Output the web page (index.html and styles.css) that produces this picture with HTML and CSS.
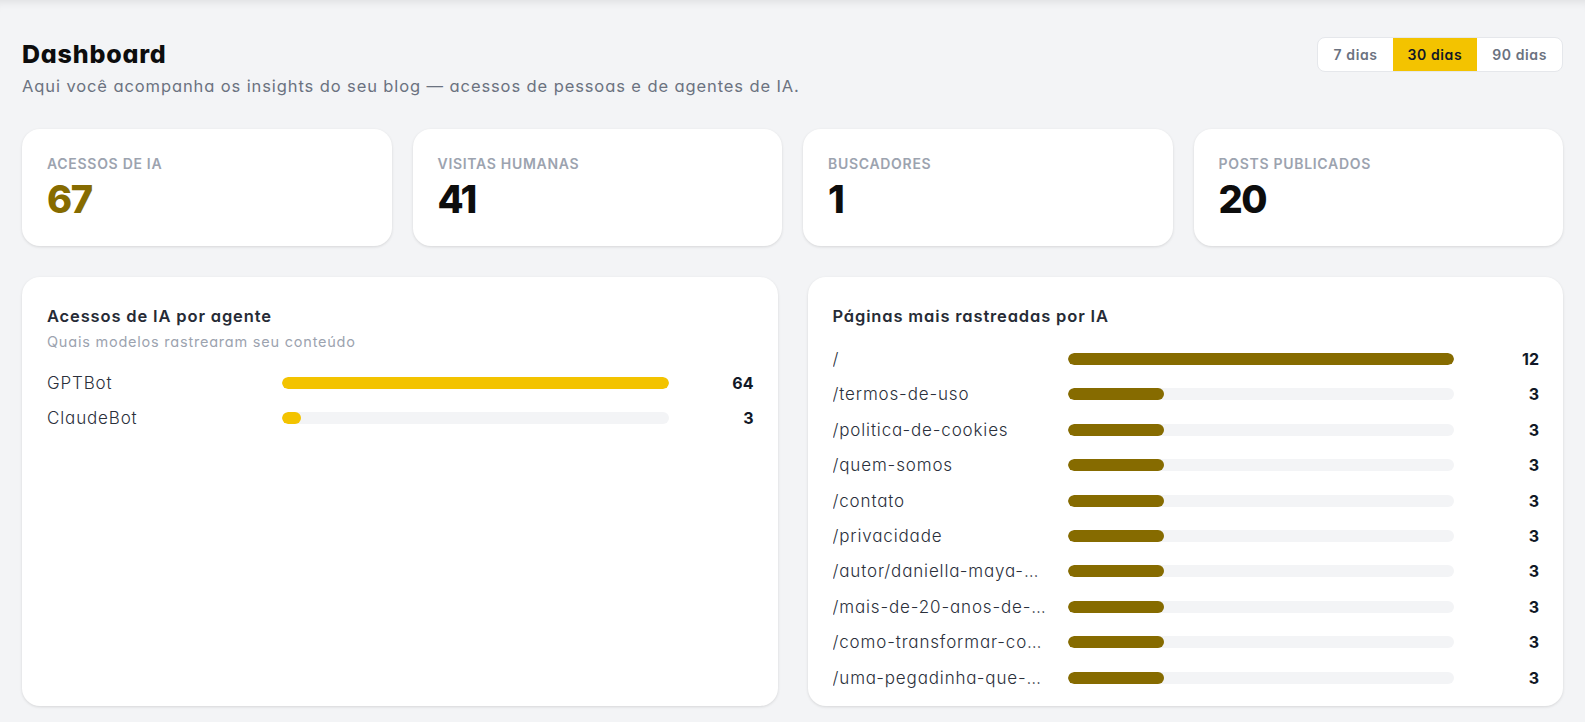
FILE: index.html
```html
<!DOCTYPE html>
<html lang="pt-BR">
<head>
<meta charset="utf-8">
<title>Dashboard</title>
<link rel="stylesheet" href="styles.css">
</head>
<body>
<main class="page">
  <header class="page-header">
    <div class="heading">
      <h1 class="title">Dashboard</h1>
      <p class="subtitle">Aqui você acompanha os insights do seu blog — acessos de pessoas e de agentes de IA.</p>
    </div>
    <div class="range">
      <button class="range-btn">7 dias</button>
      <button class="range-btn active">30 dias</button>
      <button class="range-btn">90 dias</button>
    </div>
  </header>

  <section class="stats">
    <div class="stat-card">
      <div class="stat-label">Acessos de IA</div>
      <div class="stat-value accent">67</div>
    </div>
    <div class="stat-card">
      <div class="stat-label">Visitas humanas</div>
      <div class="stat-value">41</div>
    </div>
    <div class="stat-card">
      <div class="stat-label">Buscadores</div>
      <div class="stat-value">1</div>
    </div>
    <div class="stat-card">
      <div class="stat-label">Posts publicados</div>
      <div class="stat-value">20</div>
    </div>
  </section>

  <section class="panels">
    <div class="panel">
      <h2 class="panel-title">Acessos de IA por agente</h2>
      <p class="panel-sub">Quais modelos rastrearam seu conteúdo</p>
      <div class="rows rows-agents">
        <div class="row">
          <span class="row-label">GPTBot</span>
          <div class="track"><div class="fill yellow" style="width:100%"></div></div>
          <span class="row-value">64</span>
        </div>
        <div class="row">
          <span class="row-label">ClaudeBot</span>
          <div class="track"><div class="fill yellow" style="width:4.69%"></div></div>
          <span class="row-value">3</span>
        </div>
      </div>
    </div>

    <div class="panel">
      <h2 class="panel-title">Páginas mais rastreadas por IA</h2>
      <div class="rows rows-pages">
        <div class="row">
          <span class="row-label">/</span>
          <div class="track"><div class="fill olive" style="width:100%"></div></div>
          <span class="row-value">12</span>
        </div>
        <div class="row">
          <span class="row-label">/termos-de-uso</span>
          <div class="track"><div class="fill olive" style="width:25%"></div></div>
          <span class="row-value">3</span>
        </div>
        <div class="row">
          <span class="row-label">/politica-de-cookies</span>
          <div class="track"><div class="fill olive" style="width:25%"></div></div>
          <span class="row-value">3</span>
        </div>
        <div class="row">
          <span class="row-label">/quem-somos</span>
          <div class="track"><div class="fill olive" style="width:25%"></div></div>
          <span class="row-value">3</span>
        </div>
        <div class="row">
          <span class="row-label">/contato</span>
          <div class="track"><div class="fill olive" style="width:25%"></div></div>
          <span class="row-value">3</span>
        </div>
        <div class="row">
          <span class="row-label">/privacidade</span>
          <div class="track"><div class="fill olive" style="width:25%"></div></div>
          <span class="row-value">3</span>
        </div>
        <div class="row">
          <span class="row-label">/autor/daniella-maya-…</span>
          <div class="track"><div class="fill olive" style="width:25%"></div></div>
          <span class="row-value">3</span>
        </div>
        <div class="row">
          <span class="row-label">/mais-de-20-anos-de-…</span>
          <div class="track"><div class="fill olive" style="width:25%"></div></div>
          <span class="row-value">3</span>
        </div>
        <div class="row">
          <span class="row-label">/como-transformar-co…</span>
          <div class="track"><div class="fill olive" style="width:25%"></div></div>
          <span class="row-value">3</span>
        </div>
        <div class="row">
          <span class="row-label">/uma-pegadinha-que-…</span>
          <div class="track"><div class="fill olive" style="width:25%"></div></div>
          <span class="row-value">3</span>
        </div>
      </div>
    </div>
  </section>
</main>
</body>
</html>
```

FILE: styles.css
```css
* { box-sizing: border-box; }

html, body {
  margin: 0;
  padding: 0;
  height: 100%;
}

body {
  background: #f3f4f6;
  font-family: "Inter", "Noto Sans", sans-serif;
  font-feature-settings: "cv11" 1;
  color: #111827;
  overflow: hidden;
}

.page {
  min-height: 100%;
  padding: 38px 22px 24px 22px;
  box-shadow: inset 0 9px 9px -7px rgba(0, 0, 0, 0.09);
}

.page-header {
  display: flex;
  justify-content: space-between;
  align-items: flex-start;
}

.title {
  margin: 0;
  font-size: 25px;
  line-height: 32px;
  font-weight: 800;
  color: #0d0d0d;
  letter-spacing: 0.8px;
}

.subtitle {
  margin: 4px 0 0;
  font-size: 16.5px;
  line-height: 24px;
  color: #6b7280;
  letter-spacing: 0.9px;
}

.range {
  display: flex;
  margin-top: -1px;
  height: 35px;
  background: #fff;
  border: 1px solid #e5e7eb;
  border-radius: 8px;
  overflow: hidden;
}

.range-btn {
  border: 0;
  background: transparent;
  font-family: inherit;
  font-feature-settings: "cv11" 1;
  font-size: 14px;
  font-weight: 600;
  letter-spacing: 0.6px;
  color: #6b7280;
  padding: 0 15px;
  cursor: pointer;
}

.range-btn:first-child { padding: 0 15px 0 16px; }

.range-btn.active {
  background: #f3c300;
  color: #111827;
}

.stats {
  display: grid;
  grid-template-columns: repeat(4, 1fr);
  gap: 21px;
  margin-top: 31px;
}

.stat-card {
  background: #fff;
  border-radius: 18px;
  padding: 25px 25px 0;
  height: 117px;
  box-shadow: 0 1px 3px rgba(0, 0, 0, 0.12);
}

.stat-label {
  font-size: 14px;
  line-height: 20px;
  font-weight: 600;
  text-transform: uppercase;
  color: #9ca3af;
  letter-spacing: 0.7px;
}

.stat-value {
  margin-top: 4px;
  font-size: 38px;
  line-height: 42px;
  font-weight: 800;
  color: #0d0d0d;
  letter-spacing: -1.5px;
}

.stat-value.accent { color: #866b00; }

.panels {
  display: grid;
  grid-template-columns: 1fr 1fr;
  gap: 30px;
  margin-top: 31px;
  height: 429px;
}

.panel {
  background: #fff;
  border-radius: 18px;
  padding: 27px 24px 16px 25px;
  box-shadow: 0 1px 3px rgba(0, 0, 0, 0.12);
}

.panel-title {
  margin: 0;
  font-size: 16.5px;
  line-height: 24px;
  font-weight: 600;
  color: #262b36;
  letter-spacing: 0.85px;
}

.panel-sub {
  margin: 4px 0 0;
  font-size: 14.5px;
  line-height: 20px;
  color: #9ca3af;
  letter-spacing: 0.78px;
}

.rows {
  display: flex;
  flex-direction: column;
  gap: 11.4px;
}

.rows-agents { margin-top: 19px; }
.rows-pages { margin-top: 19px; }

.row {
  display: grid;
  grid-template-columns: 33.33% 1fr 85px;
  align-items: center;
  height: 24px;
}

.row-label {
  font-size: 17px;
  line-height: 24px;
  font-weight: 350;
  color: #2b303b;
  white-space: nowrap;
  overflow: hidden;
  letter-spacing: 0.85px;
  padding-right: 4px;
}

.track {
  height: 12px;
  background: #f3f4f6;
  border-radius: 999px;
  overflow: hidden;
}

.fill {
  height: 100%;
  border-radius: 999px;
}

.fill.yellow { background: #f3c300; }
.fill.olive { background: #866b00; }

.row-value {
  text-align: right;
  font-size: 16px;
  font-weight: 700;
  color: #111827;
}
```
